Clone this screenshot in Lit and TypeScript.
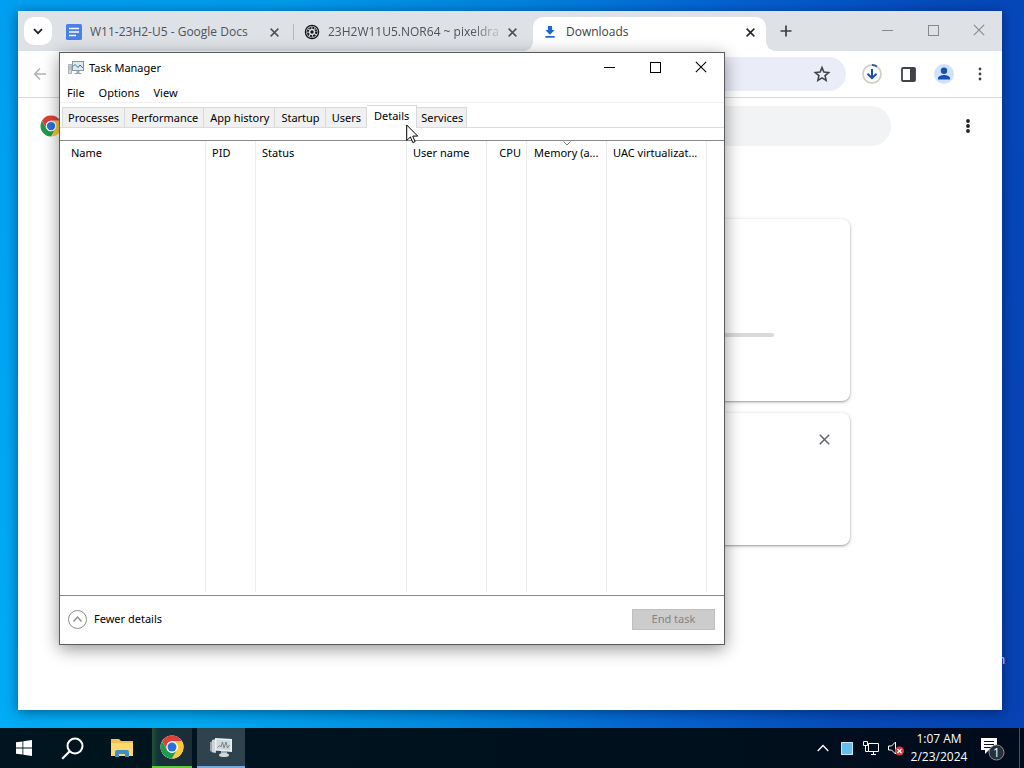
import { LitElement, html, css, svg, nothing } from "lit";
import { customElement } from "lit/decorators.js";
import { classMap } from "lit/directives/class-map.js";

const base = css`
  * { box-sizing: border-box; }
  button {
    font: inherit; color: inherit; background: none; border: 0; padding: 0; margin: 0;
    display: flex; align-items: center; justify-content: center;
  }
  svg { display: block; flex: none; }
`;

const chromeLogo = (size: number) => html`
  <svg width=${size} height=${size} viewBox="0 0 48 48" aria-hidden="true">
    <circle cx="24" cy="24" r="23" fill="#fff"/>
    <path d="M24 1a23 23 0 0 1 19.900 11.500H24A11.500 11.500 0 0 0 14 18.300V29.700L4.100 12.500A23 23 0 0 1 24 1z" fill="#dd4238"/>
    <path d="M43.900 12.500A23 23 0 0 1 24 47l10-17.300a11.500 11.500 0 0 0 0-11.400L24 12.500z" fill="#fcc934"/>
    <path d="M4.100 12.500 14 29.700A11.500 11.500 0 0 0 34 29.700L24 47A23 23 0 0 1 4.100 12.500z" fill="#229a4c"/>
    <circle cx="24" cy="24" r="11.500" fill="#fff"/>
    <circle cx="24" cy="24" r="9" fill="#2a6fe0"/>
  </svg>`;

const cross = (size: number, width: number) => html`
  <svg width=${size} height=${size} viewBox="0 0 10 10" aria-hidden="true">
    <path d="M.7.7l8.6 8.6M9.3.7L.7 9.3" stroke="currentColor" stroke-width=${width} fill="none"/>
  </svg>`;

const dots = (r: number) => html`
  <svg width="16" height="16" viewBox="0 0 16 16" fill="currentColor" aria-hidden="true">
    <circle cx="8" cy="3" r=${r}/><circle cx="8" cy="8" r=${r}/><circle cx="8" cy="13" r=${r}/>
  </svg>`;

const captionButtons = () => html`
  <button aria-label="Minimize"><svg width="11" height="11"><path d="M0 5.5h11" stroke="currentColor"/></svg></button>
  <button aria-label="Maximize"><svg width="11" height="11"><rect x=".5" y=".5" width="10" height="10" fill="none" stroke="currentColor"/></svg></button>
  <button aria-label="Close">${cross(12, 0.9)}</button>`;

const docsIcon = svg`
  <svg width="16" height="16" viewBox="0 0 16 16"><rect width="16" height="16" rx="1.5" fill="#4a80e8"/>
    <path d="M3 4.5h10M3 8h10M3 11.5h7" stroke="#fff" stroke-width="1.7"/></svg>`;
const drainIcon = svg`
  <svg width="16" height="16" viewBox="0 0 16 16" fill="none" stroke="#15181c">
    <circle cx="8" cy="8" r="6.600" stroke-width="1.300"/>
    <circle cx="8" cy="8" r="4.200" stroke-width="2" stroke-dasharray="1.900 1.400"/>
    <circle cx="8" cy="8" r="1.700" fill="#15181c" stroke="none"/>
    <path d="M8 1.500v3M8 11.500v3M1.500 8h3M11.500 8h3M3.400 3.400l2 2M10.600 10.600l2 2M12.600 3.400l-2 2M5.400 10.600l-2 2" stroke-width=".7"/></svg>`;
const downloadIcon = svg`
  <svg width="16" height="16" viewBox="0 0 16 16" fill="#1b66d2"><path d="M5.900 2h4.200v4h2.500L8 10.800 3.400 6h2.500z"/><path d="M3.300 12h9.400v1.700H3.300z"/></svg>`;

interface Tab { title: string; icon: unknown; active?: boolean; divider?: boolean; faded?: boolean; }
const browserTabs: Tab[] = [
  { title: "W11-23H2-U5 - Google Docs", icon: docsIcon, divider: true },
  { title: "23H2W11U5.NOR64 ~ pixeldra", icon: drainIcon, faded: true },
  { title: "Downloads", icon: downloadIcon, active: true },
];

@customElement("browser-window")
class BrowserWindow extends LitElement {
  static styles = [base, css`
    :host { display: flex; flex-direction: column; background: #fff; color: #3c4043; font-size: 12px; line-height: 16px; box-shadow: 0 2px 12px rgba(0, 10, 40, .5); overflow: hidden; }
    .strip { display: flex; align-items: center; height: 40px; background: #dee1e6; flex: none; }
    .search-tabs { width: 28px; height: 28px; margin: 0 4px 0 6px; border-radius: 10px; background: #fff; color: #202124; flex: none; }
    .tabs { display: flex; flex: 0 1 714px; min-width: 0; height: 40px; padding-top: 6px; align-self: flex-start; }
    .tab { flex: 1 1 0; min-width: 0; display: flex; align-items: center; gap: 8px; padding: 0 14px 4px 10px; position: relative; color: #4f5359; }
    .tab .title { flex: 1; white-space: nowrap; }
    .tab.faded .title { mask-image: linear-gradient(90deg, #000 84%, rgba(0, 0, 0, .2)); }
    .tab.active { background: #fff; border-radius: 10px 10px 0 0; color: #3c4043; margin: 0 4px 0 1px; padding: 0 10px 4px 9px; }
    .tab.active::before, .tab.active::after { content: ""; position: absolute; bottom: 0; width: 10px; height: 10px; }
    .tab.active::before { right: 100%; background: radial-gradient(circle at 0 0, transparent 10px, #fff 10px); }
    .tab.active::after { left: 100%; background: radial-gradient(circle at 100% 0, transparent 10px, #fff 10px); }
    .tab.divider { border-right: 1px solid #b4b8be; height: 16px; margin: 7px 0; padding: 0 13px 0 10px; }
    .close { width: 12px; height: 16px; color: #4b4f54; }
    .active .close { color: #202124; }
    .new { width: 28px; height: 28px; margin-left: 2px; color: #3c4043; }
    .caption { display: flex; margin-left: auto; align-self: stretch; color: #85888c; }
    .caption button { width: 46px; height: 38px; }
    .bar { display: flex; align-items: center; height: 47px; padding: 0 4px 0 6px; border-bottom: 1px solid #d8dade; flex: none; background: #fff; }
    .bar button { width: 36px; height: 36px; color: #3f4246; }
    .bar .back { width: 32px; color: #b2b2b2; }
    .url { flex: 1; display: flex; align-items: center; height: 34px; margin: 0 8px 0 80px; border-radius: 17px; background: #eaecf8; padding: 0 6px 0 16px; }
    .url input { flex: 1; min-width: 0; border: 0; background: none; font: inherit; outline: 0; }
    .head { display: flex; align-items: center; height: 56px; padding: 0 16px 0 22px; flex: none; }
    .find { flex: 1; max-width: 680px; height: 40px; margin-left: 149px; border: 0; border-radius: 20px; background: #f1f3f4; padding: 0 20px; font: inherit; outline: 0; }
    .head .more { width: 36px; height: 36px; margin-left: auto; color: #202124; }
    .list { width: 680px; max-width: calc(100% - 48px); margin: 65px auto 0; display: flex; flex-direction: column; gap: 12px; }
    .card { border-radius: 8px; background: #fff; box-shadow: 0 1px 2px rgba(60, 64, 67, .4), 0 1px 4px rgba(60, 64, 67, .2); display: flex; height: 182px; }
    .card.small { height: 132px; padding: 10px; justify-content: flex-end; }
    .card.small button { width: 32px; height: 32px; color: #5f6368; }
    .progress { flex: 1; height: 4px; margin: 114px 76px 0 104px; border-radius: 2px; background: #dadada; }
  `];

  render() {
    return html`
      <div class="strip">
        <button class="search-tabs" aria-label="Search tabs">
          <svg width="10" height="7"><path d="M1 1.200l4 4 4-4" fill="none" stroke="currentColor" stroke-width="1.800"/></svg>
        </button>
        <div class="tabs">
          ${browserTabs.map((t) => html`
            <div class=${classMap({ tab: true, active: !!t.active, divider: !!t.divider, faded: !!t.faded })}>
              <span class="icon">${t.icon}</span>
              <span class="title">${t.title}</span>
              <button class="close" aria-label="Close tab">${cross(9, 1.6)}</button>
            </div>`)}
        </div>
        <button class="new" aria-label="New tab"><svg width="12" height="12"><path d="M6 .5v11M.5 6h11" stroke="currentColor" stroke-width="1.700"/></svg></button>
        <div class="caption">${captionButtons()}</div>
      </div>
      <div class="bar">
        <button class="back" aria-label="Back"><svg width="14" height="14"><path d="M13 7H2M7 1.500L1.700 7 7 12.500" fill="none" stroke="currentColor" stroke-width="1.600"/></svg></button>
        <div class="url">
          <input aria-label="Address">
          <button aria-label="Bookmark"><svg width="18" height="18" viewBox="0 0 24 24"><path d="M12 3.500l2.500 5.900 6.400.6-4.800 4.200 1.400 6.300L12 17.200l-5.500 3.300 1.400-6.300L3.100 10l6.400-.6z" fill="none" stroke="currentColor" stroke-width="2.100"/></svg></button>
        </div>
        <button aria-label="Downloads"><svg width="20" height="20"><circle cx="10" cy="10" r="9" fill="none" stroke="#d2d0c4" stroke-width="1.800"/><path d="M10 1a9 9 0 0 1 5 1.500" fill="none" stroke="#3156b4" stroke-width="1.800"/><path d="M10 5v9M5.500 9.800L10 14.200l4.500-4.400" fill="none" stroke="#164fb5" stroke-width="2"/></svg></button>
        <button aria-label="Side panel"><svg width="15" height="15"><rect x="1" y="1" width="13" height="13" rx="1" fill="none" stroke="currentColor" stroke-width="1.800"/><path d="M9 1h5v13H9z" fill="currentColor"/></svg></button>
        <button aria-label="Profile"><svg width="20" height="20"><circle cx="10" cy="10" r="10" fill="#cfe3fc"/><circle cx="10" cy="6.800" r="3.200" fill="#164fb5"/><path d="M4 15.600v-1.600c0-2 4-3 6-3s6 1 6 3v1.600z" fill="#164fb5"/></svg></button>
        <button aria-label="Menu">${dots(1.4)}</button>
      </div>
      <div class="head">
        ${chromeLogo(22)}
        <input class="find" aria-label="Search downloads">
        <button class="more" aria-label="More actions">${dots(1.9)}</button>
      </div>
      <div class="list">
        <div class="card"><div class="progress"></div></div>
        <div class="card small"><button aria-label="Remove">${cross(11, 1.3)}</button></div>
      </div>`;
  }
}

const monitorIcon = html`
  <svg width="16" height="16" viewBox="0 0 16 16" aria-hidden="true">
    <path d="M.5 4.500h3v9h-3z" fill="#d5dadc" stroke="#98a2a6" stroke-width=".8"/>
    <path d="M1 7h2M1 9h2" stroke="#7fa38a" stroke-width=".7"/>
    <rect x="4.500" y="1.500" width="11" height="9" fill="#dcebf3" stroke="#8b979d"/>
    <path d="M5 6.500l2-2 3 3 2-2.500 3 3" fill="none" stroke="#4a6f88"/>
    <path d="M8.500 11h3v2h-3z" fill="#a4adb1"/><path d="M6.500 13.500h7" stroke="#9aa4a9"/>
  </svg>`;

const columns = [
  { id: "name", label: "Name" }, { id: "pid", label: "PID" }, { id: "status", label: "Status" },
  { id: "user", label: "User name" }, { id: "cpu", label: "CPU" },
  { id: "memory", label: "Memory (a...", sorted: true }, { id: "uac", label: "UAC virtualizat..." },
];
const managerTabs = ["Processes", "Performance", "App history", "Startup", "Users", "Details", "Services"];

@customElement("task-manager")
class TaskManager extends LitElement {
  static styles = [base, css`
    :host { display: flex; flex-direction: column; background: #fff; border: 1px solid #5c5c5e; color: #000; font-family: "Noto Sans", "Open Sans", sans-serif; font-size: 11px; line-height: 16px; box-shadow: 0 4px 16px rgba(0, 0, 0, .42); }
    .title { display: flex; align-items: center; gap: 5px; height: 30px; padding-left: 8px; flex: none; }
    .caption { display: flex; margin-left: auto; align-self: stretch; }
    .caption button { width: 46px; padding-bottom: 2px; }
    nav { display: flex; gap: 14px; height: 20px; padding: 0 7px; border-bottom: 1px solid #f0f0f0; flex: none; }
    nav button { height: 19px; }
    .tabs { display: flex; align-items: flex-end; height: 25px; padding-left: 2px; border-bottom: 1px solid #dcdcdc; flex: none; }
    .tabs button { height: 20px; padding: 0 5px 0 6px; background: #f0f0f0; border: 1px solid #d9d9d9; border-width: 1px 1px 0 0; white-space: nowrap; }
    .tabs button:first-child { border-left-width: 1px; padding-left: 5px; }
    .tabs button.active { height: 23px; margin-bottom: -1px; padding: 0 7px 2px; background: #fff; }
    .tabs button:last-child { padding: 0 3px 0 4px; }
    .pane { flex: 1; display: flex; margin-top: 12px; border: 1px solid #8a8a8a; border-width: 1px 0; padding: 0 0 3px 1px; }
    table { width: 100%; height: 100%; border-collapse: separate; border-spacing: 0; table-layout: fixed; }
    th, td { border-right: 1px solid #ececec; padding: 0; }
    th:last-child, td:last-child { border-right: 0; }
    th { position: relative; height: 24px; padding: 0 5px 0 6px; font-weight: 400; text-align: left; white-space: nowrap; }
    .name { width: 145px; } .pid { width: 50px; } .status { width: 151px; } .user { width: 80px; }
    .cpu { width: 40px; } .memory { width: 80px; } .uac { width: 100px; }
    th.name { padding-left: 10px; }
    th.cpu { text-align: right; }
    th.memory { padding-left: 7px; }
    .sort { position: absolute; top: 0; left: 50%; margin-left: -4px; }
    footer { display: flex; align-items: center; justify-content: space-between; height: 48px; padding: 0 9px 2px 8px; flex: none; }
    .fewer { gap: 7px; }
    .end { width: 83px; height: 21px; background: #ccc; border: 1px solid #bfbfbf; color: #838383; }
  `];

  render() {
    return html`
      <div class="title">${monitorIcon}<span>Task Manager</span><div class="caption">${captionButtons()}</div></div>
      <nav><button>File</button><button>Options</button><button>View</button></nav>
      <div class="tabs" role="tablist">
        ${managerTabs.map((t) => html`<button role="tab" class=${classMap({ active: t === "Details" })}>${t}</button>`)}
      </div>
      <div class="pane">
        <table>
          <thead><tr>
            ${columns.map((c) => html`<th class=${c.id}>${c.sorted ? html`<svg class="sort" width="8" height="5"><path d="M.5.500L4 4 7.500.5" fill="none" stroke="#777"/></svg>` : nothing}${c.label}</th>`)}<th></th>
          </tr></thead>
          <tbody><tr>${columns.map(() => html`<td></td>`)}<td></td></tr></tbody>
        </table>
      </div>
      <footer>
        <button class="fewer"><svg width="19" height="19"><circle cx="9.500" cy="9.500" r="9" fill="none" stroke="#8c8c8c"/><path d="M5.500 11.500l4-4.500 4 4.500" fill="none" stroke="#8c8c8c" stroke-width="1.300"/></svg>Fewer details</button>
        <button class="end" disabled>End task</button>
      </footer>`;
  }
}

@customElement("task-bar")
class TaskBar extends LitElement {
  static styles = [base, css`
    :host { display: flex; align-items: stretch; height: 40px; background: linear-gradient(90deg, #00151f, #00111d 60%, #000b1c); color: #fff; font-size: 12px; line-height: 18px; }
    .app { width: 48px; }
    .wide { width: 52px; }
    .chrome { width: 40px; margin: 0 5px 0 4px; background: linear-gradient(90deg, #1f5434, #14323a 15%, #1d2d38); border-bottom: 2px solid #5ecb3c; }
    .manager { background: #2f434e; border-bottom: 2px solid #76acdf; }
    .tray { display: flex; align-items: center; margin-left: auto; }
    .tray button { width: 24px; height: 40px; }
    .tray .clock { width: 60px; flex-direction: column; margin: 0 10px 0 2px; white-space: nowrap; }
    .tray .notes { width: 40px; padding-right: 14px; }
    .tray .desk { width: 5px; border-left: 1px solid #44505e; }
  `];

  render() {
    return html`
      <button class="app" aria-label="Start"><svg width="16" height="16" fill="#fff"><path d="M0 2.300L6.500 1.400v6.200H0zM7.300 1.300L16 0v7.600H7.300zM0 8.400h6.500v6.200L0 13.700zM7.300 8.400H16V16l-8.700-1.300z"/></svg></button>
      <button class="app" aria-label="Search"><svg width="23" height="23"><circle cx="14" cy="9" r="7.500" fill="none" stroke="#fff" stroke-width="2"/><path d="M8.500 14.500L1.200 21.800" stroke="#fff" stroke-width="2.200"/></svg></button>
      <button class="app wide" aria-label="File Explorer"><svg width="22" height="20"><path d="M0 1h8l2 2h12v15H0z" fill="#f2c14e"/><path d="M0 5h22v13H0z" fill="#fcd86e"/><path d="M4 19v-5a2 2 0 0 1 2-2h10a2 2 0 0 1 2 2v5h-4v-3H8v3z" fill="#3f8fc4"/></svg></button>
      <button class="app chrome" aria-label="Chrome">${chromeLogo(24)}</button>
      <button class="app manager" aria-label="Task Manager"><svg width="24" height="24" viewBox="0 0 24 24">
        <path d="M1 7l4-1v12l-4-2z" fill="#9ba3a6"/><path d="M3 5l4-1v14l-4-1z" fill="#cfd5d7"/>
        <path d="M6 3l17 1v13L6 15.500z" fill="#edf1f3"/><path d="M7.500 4.600l14 .8v10l-14-1.200z" fill="#cfd8dc"/>
        <path d="M8.500 12.500l2-2 1.500 1.500 1.500-5 1.500 6 2-6 1.500 6 2-3" fill="none" stroke="#6c7c85" stroke-width=".9"/>
        <path d="M12 16h6v3h-6z" fill="#a4adb1"/><ellipse cx="15" cy="20" rx="5" ry="2" fill="#d2d7d9"/></svg></button>
      <div class="tray">
        <button aria-label="Show hidden icons"><svg width="12" height="8"><path d="M.7 7L6 1.500 11.300 7" fill="none" stroke="#fff" stroke-width="1.300"/></svg></button>
        <button aria-label="Display"><svg width="12" height="13"><path d="M0 0h12v13H0z" fill="#64bdec"/><path d="M.5.500h11v12H.5z" fill="none" stroke="#c9e8f8"/></svg></button>
        <button aria-label="Network"><svg width="17" height="15" fill="none" stroke="#fff"><path d="M5.500 2.500h10v8h-10zM8 13.500h5M10.500 10.500v3M2.500 4.500v6h3"/><path d="M.5.500h4v4h-4z" fill="#00111d"/></svg></button>
        <button aria-label="Volume"><svg width="17" height="15"><path d="M1.500 5h3l4-4v12l-4-4h-3z" fill="none" stroke="#fff"/><circle cx="12.500" cy="10" r="4.500" fill="#d93a3d"/><path d="M10.500 8l4 4M14.500 8l-4 4" stroke="#fff" stroke-width="1.200"/></svg></button>
        <button class="clock"><span>1:07 AM</span><span>2/23/2024</span></button>
        <button class="notes" aria-label="Notifications, 1 new"><svg width="26" height="26"><path d="M2 3h16v12h-8l-4 4v-4H2z" fill="#fff"/><path d="M5 6.500h10M5 9.500h10M5 12.500h7" stroke="#0a1420"/><circle cx="17.500" cy="17.500" r="7.500" fill="#2b3038" stroke="#8b8f94"/><text x="17.500" y="22" text-anchor="middle" font-size="12" fill="#fff">1</text></svg></button>
        <button class="desk" aria-label="Show desktop"></button>
      </div>`;
  }
}

@customElement("app-root")
class AppRoot extends LitElement {
  static styles = [base, css`
    :host { display: flex; flex-direction: column; height: 100vh; overflow: hidden; font-family: "Open Sans", "Noto Sans", sans-serif; }
    .desktop { flex: 1; position: relative; background: linear-gradient(180deg, rgba(0, 70, 200, .14), transparent), linear-gradient(97deg, #00aef8 0, #00aaf2 25%, #008be2 48%, #0568d4 65%, #064cbc 84%, #0742b4 100%); }
    browser-window { position: absolute; inset: 11px 22px 18px 18px; }
    task-manager { position: absolute; inset: 52px 299px 83px 59px; }
    .label { position: absolute; right: 19px; bottom: 60px; font-size: 12px; line-height: 16px; color: #fff; }
    .pointer { position: absolute; left: 406px; top: 124px; }
  `];

  render() {
    return html`
      <main class="desktop">
        <span class="label">n</span>
        <browser-window></browser-window>
        <task-manager></task-manager>
        <svg class="pointer" width="13" height="20"><path d="M.7 1v15.500l3.700-3.500 2.400 5.600 2.300-1-2.400-5.500h5z" fill="#fff" stroke="#000"/></svg>
      </main>
      <task-bar></task-bar>`;
  }
}
